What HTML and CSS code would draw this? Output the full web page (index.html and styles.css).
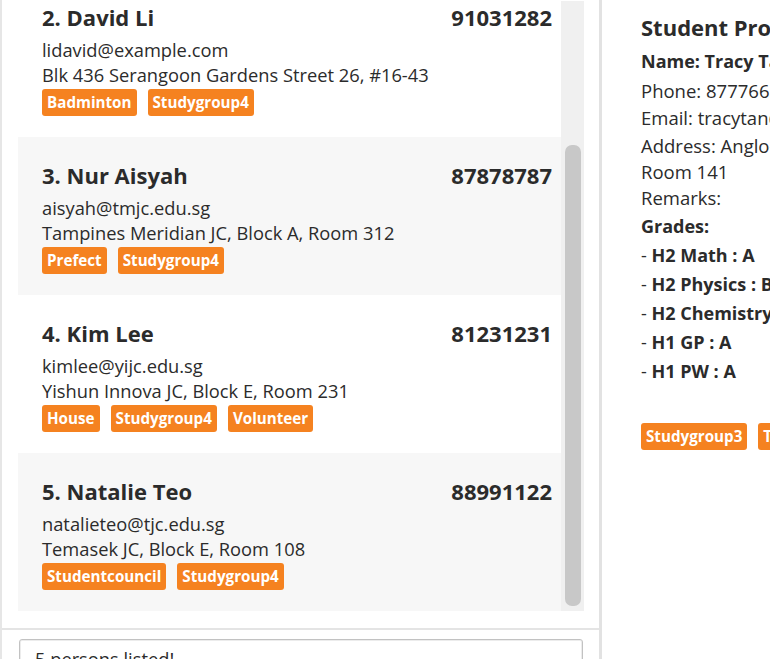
FILE: index.html
```html
<!DOCTYPE html>
<html lang="en">
<head>
<meta charset="utf-8">
<title>Address Book</title>
<link rel="stylesheet" href="styles.css">
</head>
<body>
<div class="app">
  <div class="left">
    <div class="list-pane">
      <div class="list-view">
        <div class="viewport">
          <div class="cards">
            <div class="card">
              <div class="card-head"><span>2. David Li</span><span>91031282</span></div>
              <div class="line first">lidavid@example.com</div>
              <div class="line">Blk 436 Serangoon Gardens Street 26, #16-43</div>
              <div class="tags"><span class="tag">Badminton</span><span class="tag">Studygroup4</span></div>
            </div>
            <div class="card alt">
              <div class="card-head"><span>3. Nur Aisyah</span><span>87878787</span></div>
              <div class="line first">aisyah@tmjc.edu.sg</div>
              <div class="line">Tampines Meridian JC, Block A, Room 312</div>
              <div class="tags"><span class="tag">Prefect</span><span class="tag">Studygroup4</span></div>
            </div>
            <div class="card">
              <div class="card-head"><span>4. Kim Lee</span><span>81231231</span></div>
              <div class="line first">kimlee@yijc.edu.sg</div>
              <div class="line">Yishun Innova JC, Block E, Room 231</div>
              <div class="tags"><span class="tag">House</span><span class="tag">Studygroup4</span><span class="tag">Volunteer</span></div>
            </div>
            <div class="card alt">
              <div class="card-head"><span>5. Natalie Teo</span><span>88991122</span></div>
              <div class="line first">natalieteo@tjc.edu.sg</div>
              <div class="line">Temasek JC, Block E, Room 108</div>
              <div class="tags"><span class="tag">Studentcouncil</span><span class="tag">Studygroup4</span></div>
            </div>
          </div>
        </div>
        <div class="track"><div class="thumb"></div></div>
      </div>
    </div>
    <div class="result-pane">
      <div class="result-box">5 persons listed!</div>
    </div>
  </div>
  <div class="right">
    <div class="title">Student Profile</div>
    <div class="pname">Name: Tracy Tan</div>
    <div class="info phone">Phone: 87776655</div>
    <div class="info email">Email: tracytan@acjc.edu.sg</div>
    <div class="info address">Address: Anglo-Chinese JC, Block B,</div>
    <div class="info">Room 141</div>
    <div class="info">Remarks:</div>
    <div class="grades">Grades:</div>
    <div class="grade"><span class="dash">- </span>H2 Math : A</div>
    <div class="grade"><span class="dash">- </span>H2 Physics : B</div>
    <div class="grade"><span class="dash">- </span>H2 Chemistry : A</div>
    <div class="grade"><span class="dash">- </span>H1 GP : A</div>
    <div class="grade"><span class="dash">- </span>H1 PW : A</div>
    <div class="tags ptags"><span class="tag">Studygroup3</span><span class="tag">Treasurer</span></div>
  </div>
</div>
</body>
</html>
```
FILE: styles.css
```css
html, body {
  margin: 0;
  padding: 0;
}

body {
  width: 770px;
  height: 659px;
  overflow: hidden;
  background: #ffffff;
  color: #2b2b2b;
  font-family: "Open Sans", "Noto Sans", sans-serif;
}

.app {
  display: flex;
  height: 659px;
  overflow: hidden;
}

.left {
  width: 602px;
  flex: none;
  box-sizing: border-box;
  border-left: 2px solid #e6e6e6;
  border-right: 3px solid #e2e2e2;
  display: flex;
  flex-direction: column;
}

.list-pane {
  height: 630px;
  flex: none;
  box-sizing: border-box;
  padding: 1px 15px 17px 16px;
  border-bottom: 2px solid #e4e4e4;
}

.list-view {
  display: flex;
  height: 610px;
}

.viewport {
  flex: 1;
  overflow: hidden;
}

.cards {
  margin-top: -22px;
}

.card {
  height: 158px;
  box-sizing: border-box;
  padding: 23px 9px 0 24px;
  background: #ffffff;
}

.card.alt {
  background: #f7f7f7;
}

.card-head {
  display: flex;
  justify-content: space-between;
  font-size: 22px;
  font-weight: 700;
  line-height: 30px;
}

.line {
  font-size: 18.3px;
  line-height: 25px;
  white-space: nowrap;
}

.line.first {
  margin-top: 5px;
}

.tags {
  display: flex;
  gap: 11px;
  margin-top: 2px;
}

.tag {
  display: block;
  height: 27px;
  padding: 0 5px;
  border-radius: 3px;
  background: #f58220;
  color: #ffffff;
  font-size: 15.2px;
  font-weight: 700;
  line-height: 27px;
  white-space: nowrap;
}

.track {
  width: 23px;
  flex: none;
  box-sizing: border-box;
  padding-left: 4px;
  background: #f0f0f0;
}

.thumb {
  width: 16px;
  height: 461px;
  margin-top: 144px;
  border-radius: 7px;
  background: #c8c8c8;
}

.result-pane {
  flex: 1;
  min-height: 0;
  overflow: hidden;
  padding: 9px 16px 0 17px;
}

.result-box {
  height: 60px;
  box-sizing: border-box;
  padding: 6px 15px;
  border: 1px solid #c2c2c2;
  border-radius: 3px;
  box-shadow: inset 0 0 0 1px #ececec;
  font-size: 18.3px;
  line-height: 25px;
}

.right {
  flex: 1;
  min-width: 0;
  overflow: hidden;
  padding: 12px 0 0 39px;
  white-space: nowrap;
}

.title {
  font-size: 22px;
  font-weight: 700;
  line-height: 30px;
}

.pname {
  margin-top: 5px;
  font-size: 18px;
  font-weight: 700;
  line-height: 29px;
}

.info {
  font-size: 18.5px;
  line-height: 26px;
}

.info.phone {
  margin-top: 2px;
}

.info.email {
  margin-top: 1px;
}

.info.address {
  margin-top: 2px;
}

.grades {
  margin-top: 1px;
  font-size: 18px;
  font-weight: 700;
  line-height: 29px;
}

.grade {
  font-size: 18px;
  font-weight: 700;
  line-height: 29px;
}

.dash {
  font-weight: 400;
}

.ptags {
  margin-top: 37px;
}
```
